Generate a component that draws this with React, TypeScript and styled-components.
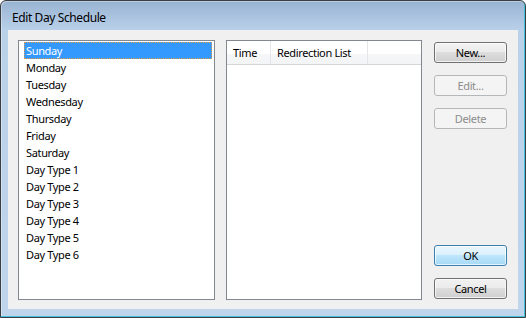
import React from "react";
import styled, { createGlobalStyle } from "styled-components";

const GlobalStyle = createGlobalStyle`
  html, body {
    margin: 0;
    padding: 0;
    background: #ffffff;
  }
  * {
    box-sizing: border-box;
  }
`;

const Window = styled.div`
  width: 526px;
  height: 318px;
  display: flex;
  flex-direction: column;
  border: 1px solid #3b3f44;
  border-radius: 6px 6px 0 0;
  background: linear-gradient(#98b3d2 0px, #bad1ea 30px, #bed5ec 100%);
  box-shadow: inset -1px -1px 0 #47c0df, inset 1px 1px 0 rgba(255, 255, 255, 0.35);
  font-family: "Segoe UI", "Noto Sans", sans-serif;
  font-size: 11px;
  letter-spacing: -0.35px;
  color: #000;
`;

const TitleBar = styled.div`
  height: 29px;
  display: flex;
  align-items: center;
  padding: 3px 0 0 11px;
  font-size: 12px;
  letter-spacing: -0.4px;
  color: #000;
`;

const Frame = styled.div`
  flex: 1;
  padding: 0 7px 8px;
  display: flex;
`;

const Client = styled.div`
  flex: 1;
  background: #f0f0f0;
  display: flex;
  padding: 10px 11px 9px 10px;
`;

const DayList = styled.div`
  width: 197px;
  height: 260px;
  background: #fff;
  border: 1px solid #828790;
  padding: 1px 2px 0 5px;
  display: flex;
  flex-direction: column;
`;

const DayItem = styled.div<{ $selected?: boolean }>`
  height: 17px;
  display: flex;
  align-items: center;
  padding: 0 0 1px 1px;
  white-space: nowrap;
  color: ${(p) => (p.$selected ? "#fff" : "#000")};
  background: ${(p) => (p.$selected ? "#3399ff" : "transparent")};
  border: 1px dotted ${(p) => (p.$selected ? "#d99a4a" : "transparent")};
`;

const EntryList = styled.div`
  width: 196px;
  height: 260px;
  margin-left: 11px;
  background: #fff;
  border: 1px solid #828790;
`;

const HeaderRow = styled.div`
  height: 24px;
  display: flex;
  background: linear-gradient(#ffffff 0%, #ffffff 55%, #f5f6f7 56%, #f3f4f6 100%);
  border-bottom: 1px solid #d5d5d5;
`;

const HeaderCell = styled.div<{ $width: number }>`
  width: ${(p) => p.$width}px;
  display: flex;
  align-items: center;
  padding: 0 0 1px 6px;
  border-right: 1px solid #e3e5e8;
  white-space: nowrap;
`;

const ButtonColumn = styled.div`
  width: 73px;
  margin-left: 12px;
  display: flex;
  flex-direction: column;
  padding: 2px 0 1px;
  gap: 12px;
`;

const Spacer = styled.div`
  flex: 1;
`;

const Button = styled.button<{ $default?: boolean }>`
  width: 73px;
  height: 21px;
  padding: 0 0 1px;
  margin: 0;
  font-family: inherit;
  font-size: 11px;
  letter-spacing: inherit;
  border-radius: 3px;
  color: ${(p) => (p.disabled ? "#8d8d8d" : "#000")};
  border: 1px solid
    ${(p) => (p.disabled ? "#b5b8bb" : p.$default ? "#3c7fb1" : "#707070")};
  background: ${(p) =>
    p.disabled
      ? "#f4f4f4"
      : p.$default
      ? "linear-gradient(#eaf6fd 0%, #d9f0fc 50%, #bee6fd 50%, #a7d9f5 100%)"
      : "linear-gradient(#f2f2f2 0%, #ebebeb 50%, #dddddd 50%, #cfcfcf 100%)"};
  box-shadow: inset 0 0 0 1px
    ${(p) => (p.disabled ? "#f4f4f4" : "rgba(255, 255, 255, 0.7)")};
`;

const days = [
  "Sunday",
  "Monday",
  "Tuesday",
  "Wednesday",
  "Thursday",
  "Friday",
  "Saturday",
  "Day Type 1",
  "Day Type 2",
  "Day Type 3",
  "Day Type 4",
  "Day Type 5",
  "Day Type 6",
];

export default function App() {
  return (
    <>
      <GlobalStyle />
      <Window>
        <TitleBar>Edit Day Schedule</TitleBar>
        <Frame>
          <Client>
            <DayList>
              {days.map((d, i) => (
                <DayItem key={d} $selected={i === 0}>
                  {d}
                </DayItem>
              ))}
            </DayList>
            <EntryList>
              <HeaderRow>
                <HeaderCell $width={44}>Time</HeaderCell>
                <HeaderCell $width={97}>Redirection List</HeaderCell>
              </HeaderRow>
            </EntryList>
            <ButtonColumn>
              <Button>New...</Button>
              <Button disabled>Edit...</Button>
              <Button disabled>Delete</Button>
              <Spacer />
              <Button $default>OK</Button>
              <Button>Cancel</Button>
            </ButtonColumn>
          </Client>
        </Frame>
      </Window>
    </>
  );
}
